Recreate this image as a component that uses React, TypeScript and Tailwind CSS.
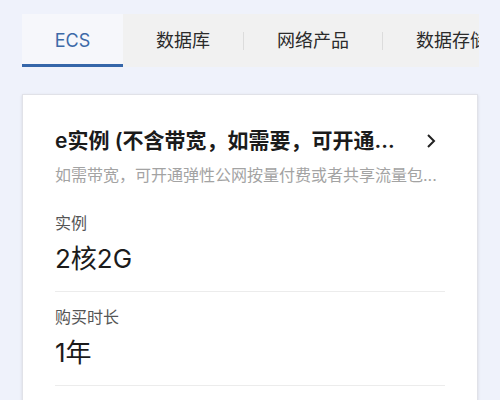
const tabs = ['ECS', '数据库', '网络产品', '数据存储']

const font = { fontFamily: 'Inter, "Noto Sans CJK SC", sans-serif' }

export default function App() {
  return (
    <div className="w-[500px] h-[400px] overflow-hidden bg-[#eff2fb]" style={font}>
      {/* Tabs */}
      <div className="pt-[14px] px-[22px] pr-[21px]">
        <div className="flex items-stretch h-[53px] bg-[#f1f1f1] overflow-hidden">
          {tabs.map((t, i) => (
            <div key={t} className="flex items-stretch shrink-0">
              {i > 1 && <div className="w-px h-[18px] self-center bg-[#dcdcdc]" />}
              <div
                className={
                  i === 0
                    ? 'flex items-center justify-center w-[101px] bg-[#f6f7fb] border-b-[3px] border-[#3566a9] pt-[3px] text-[18px] text-[#3d6aa8] shrink-0'
                    : 'flex items-center px-[33px] text-[18px] text-[#2b2b2b] shrink-0'
                }
              >
                {t}
              </div>
            </div>
          ))}
        </div>
      </div>

      {/* Card */}
      <div className="mt-[27px] mx-[22px] bg-white border border-[#e1e2e8] shadow-sm pt-[31px] px-[32px] h-[320px]">
        <div className="flex items-center justify-between h-[30px]">
          <span className="text-[21px] leading-[30px] font-semibold text-[#1b1b1b] whitespace-nowrap">
            e实例 (不含带宽，如需要，可开通...
          </span>
          <svg width="16" height="16" viewBox="0 0 16 16" className="shrink-0 mr-[6px]">
            <polyline points="5,2 11,8 5,14" fill="none" stroke="#222" strokeWidth="2" />
          </svg>
        </div>
        <div className="mt-[7px] text-[16px] leading-[24px] text-[#a3a3a3] whitespace-nowrap">
          如需带宽，可开通弹性公网按量付费或者共享流量包...
        </div>
        <div className="mt-[11px]">
          <div className="pt-[13px] pb-[14px] border-b border-[#ececec]">
            <div className="text-[16px] leading-[24px] text-[#555]">实例</div>
            <div className="mt-[6px] text-[26px] leading-[36px] text-[#1b1b1b]">2核2G</div>
          </div>
          <div className="pt-[13px] pb-[14px] border-b border-[#ececec]">
            <div className="text-[16px] leading-[24px] text-[#555]">购买时长</div>
            <div className="mt-[6px] text-[26px] leading-[36px] text-[#1b1b1b]">1年</div>
          </div>
        </div>
      </div>
    </div>
  )
}
